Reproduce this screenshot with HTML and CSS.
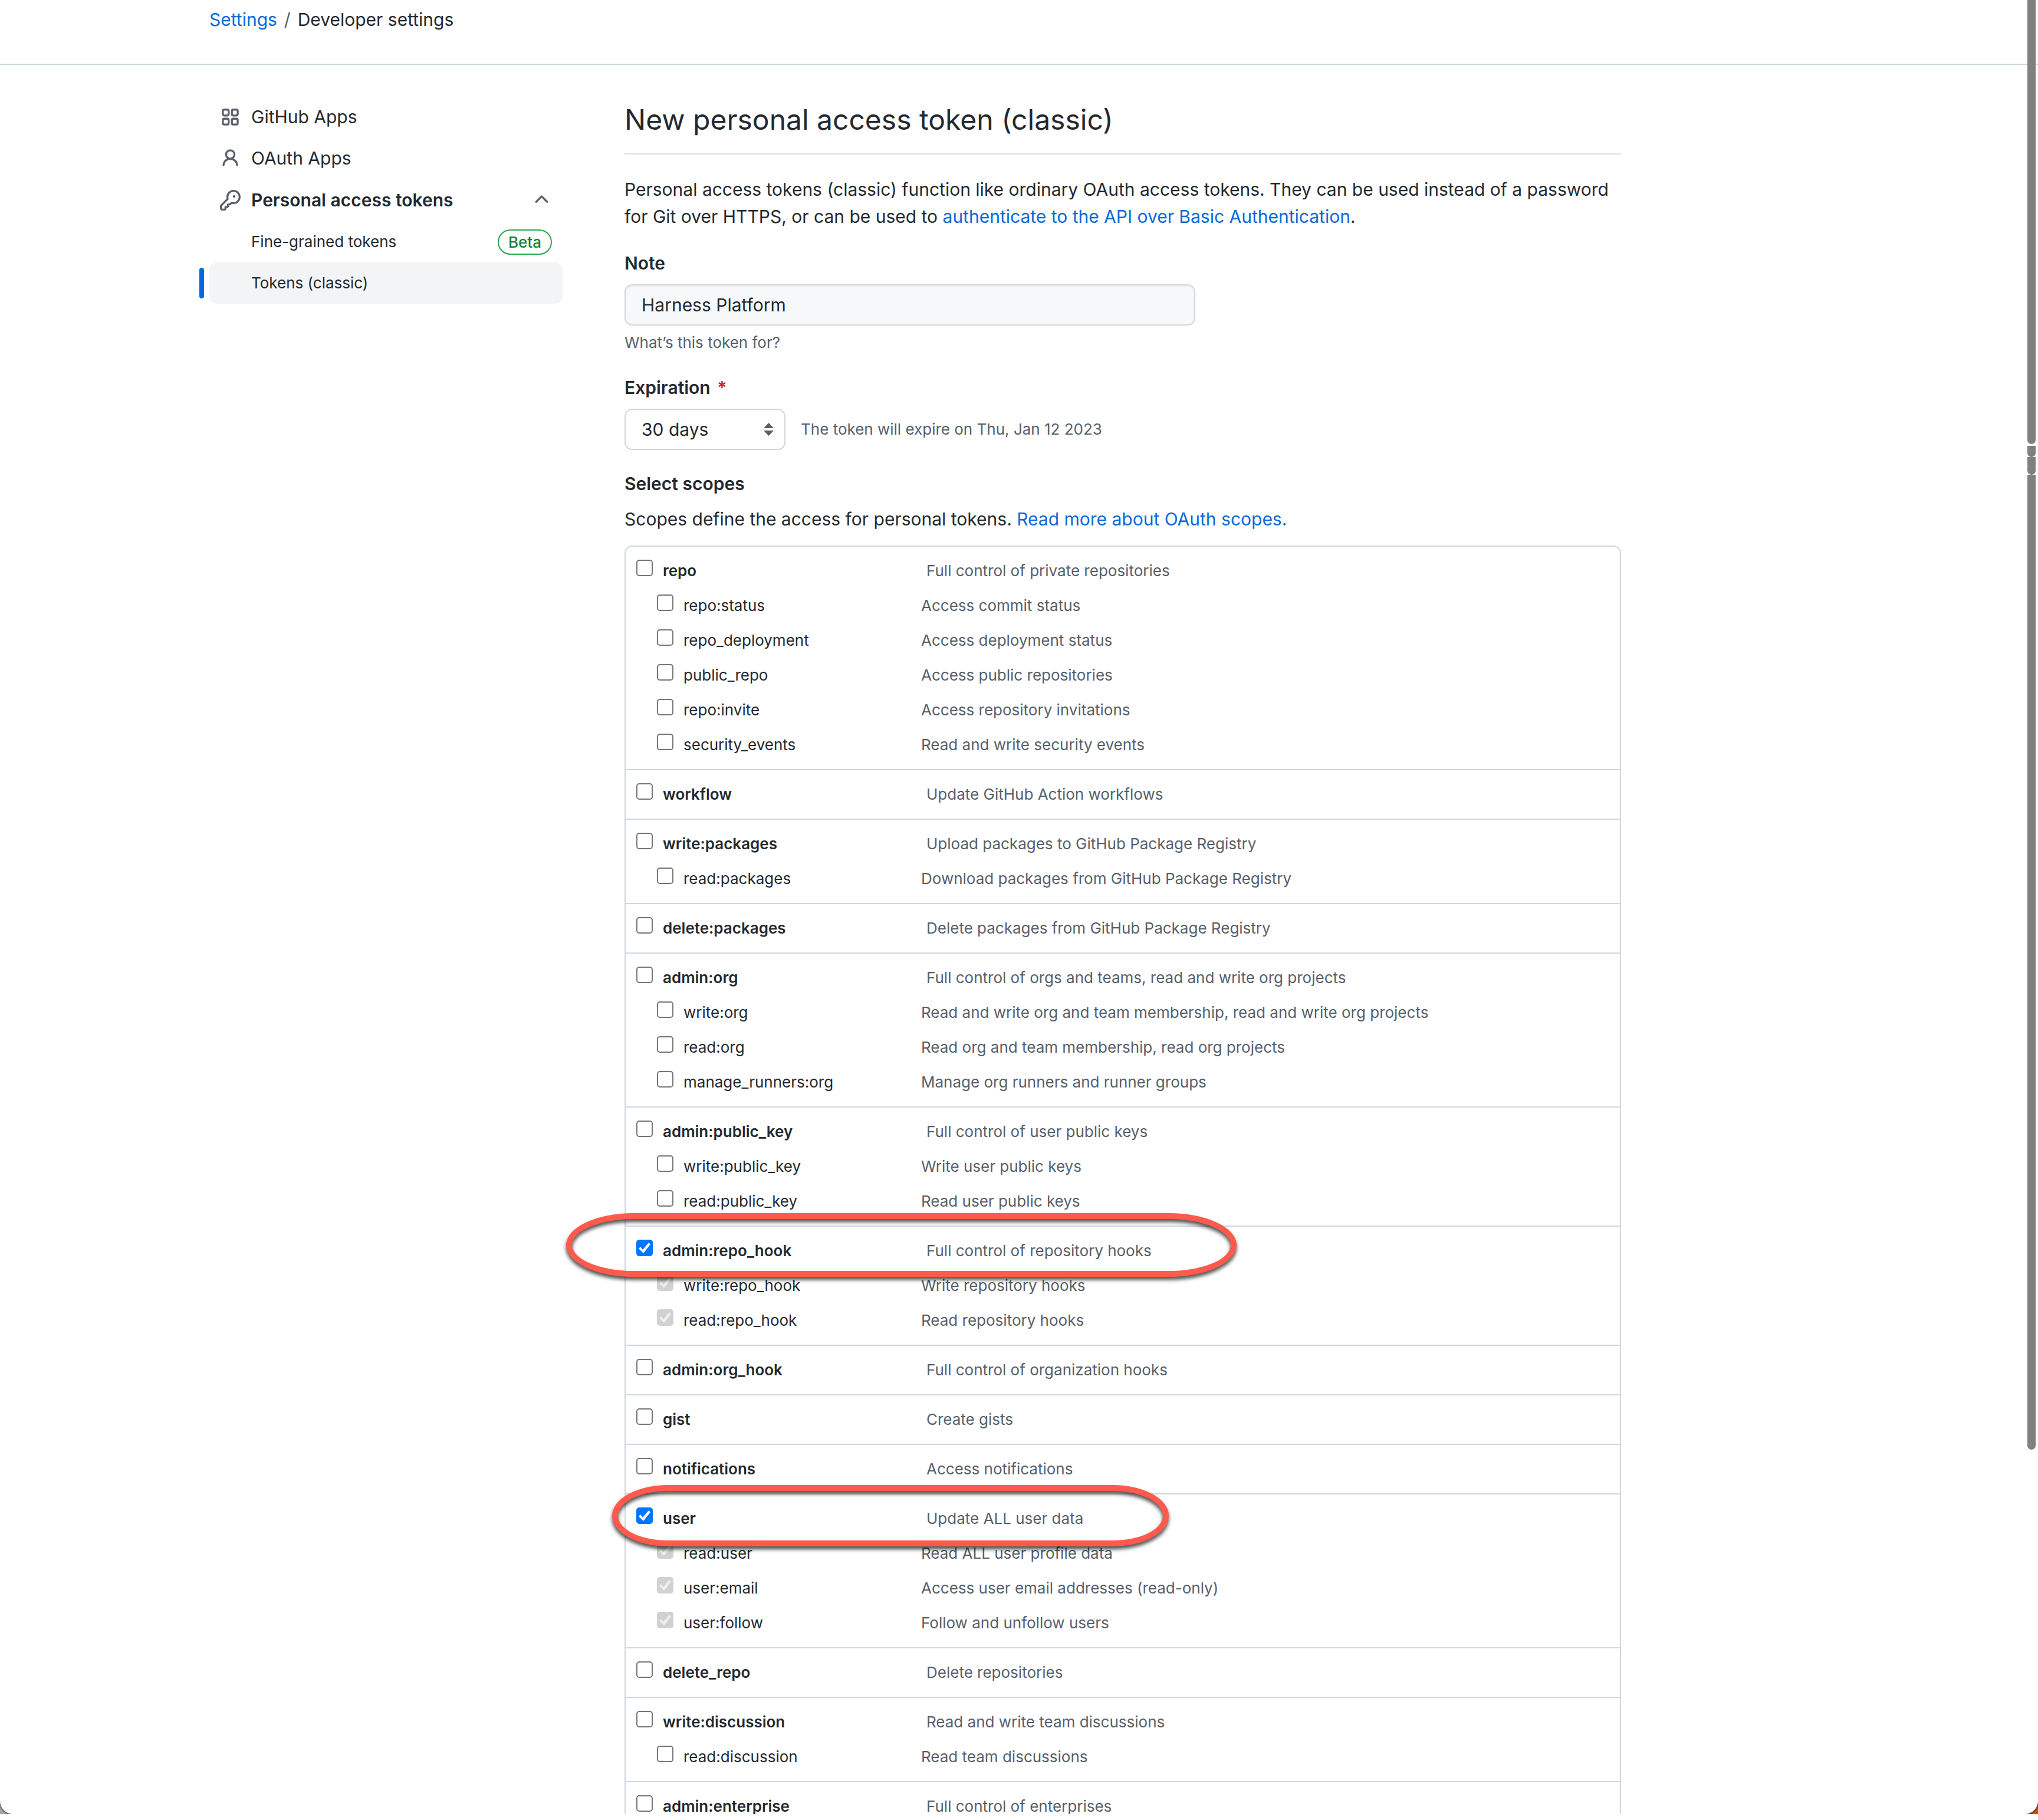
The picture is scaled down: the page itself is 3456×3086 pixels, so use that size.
FILE: index.html
```html
<!DOCTYPE html>
<html lang="en">
<head>
<meta charset="utf-8">
<title>New personal access token (classic)</title>
<link rel="stylesheet" href="styles.css">
</head>
<body>
<div class="backdrop">
<div class="window">
  <header class="topbar">
    <nav class="container breadcrumb" aria-label="Breadcrumb">
      <a href="#settings">Settings</a><span class="slash">/</span><span>Developer settings</span>
    </nav>
  </header>
  <div class="container layout">
    <nav class="sidebar" aria-label="Developer settings">
      <a class="nav-item" href="#apps"><svg class="icon" viewBox="0 0 16 16" fill="none" stroke="currentColor" stroke-width="1.5"><rect x="2.25" y="2.25" width="4.5" height="4.5" rx="1"/><rect x="9.25" y="2.25" width="4.5" height="4.5" rx="1"/><rect x="2.25" y="9.25" width="4.5" height="4.5" rx="1"/><rect x="9.25" y="9.25" width="4.5" height="4.5" rx="1"/></svg>GitHub Apps</a>
      <a class="nav-item" href="#oauth"><svg class="icon" viewBox="0 0 16 16" fill="currentColor"><path d="M10.5 5a2.5 2.5 0 11-5 0 2.5 2.5 0 015 0zm.061 3.073a4 4 0 10-5.123 0 6.004 6.004 0 00-3.431 5.142.75.75 0 001.498.07 4.5 4.5 0 018.99 0 .75.75 0 101.498-.07 6.005 6.005 0 00-3.432-5.142z"/></svg>OAuth Apps</a>
      <button class="nav-item nav-group" type="button" aria-expanded="true"><svg class="icon" viewBox="0 0 16 16" fill="currentColor"><path d="M6.5 5.5a4 4 0 112.731 3.795.75.75 0 00-.768.18L7.44 10.5H6.25a.75.75 0 00-.75.75v1.19l-.06.06H4.25a.75.75 0 00-.75.75v1.19l-.06.06H1.75a.25.25 0 01-.25-.25v-1.69l5.024-5.023a.75.75 0 00.181-.768A3.995 3.995 0 016.5 5.5zm4-5.5a5.5 5.5 0 00-5.348 6.788L.22 11.72a.75.75 0 00-.22.53v2C0 15.216.784 16 1.75 16h2a.75.75 0 00.53-.22l.5-.5a.75.75 0 00.22-.53V14h.75a.75.75 0 00.53-.22l.5-.5a.75.75 0 00.22-.53V12h.75a.75.75 0 00.53-.22l.932-.932A5.5 5.5 0 1010.5 0zm.5 6a1 1 0 100-2 1 1 0 000 2z"/></svg>Personal access tokens<svg class="icon trailing" viewBox="0 0 16 16" fill="currentColor"><path d="M3.22 9.78a.75.75 0 010-1.06l4.25-4.25a.75.75 0 011.06 0l4.25 4.25a.75.75 0 01-1.06 1.06L8 6.06 4.28 9.78a.75.75 0 01-1.06 0z"/></svg></button>
      <a class="nav-item nav-sub" href="#fine">Fine-grained tokens<span class="badge trailing">Beta</span></a>
      <a class="nav-item nav-sub current" href="#classic" aria-current="page">Tokens (classic)</a>
    </nav>

    <main class="main">
      <h1>New personal access token (classic)</h1>
      <p class="intro">Personal access tokens (classic) function like ordinary OAuth access tokens. They can be used instead of a password for Git over HTTPS, or can be used to <a href="#basic">authenticate to the API over Basic Authentication</a>.</p>

      <form>
        <div class="field">
          <label class="field-label" for="note">Note</label>
          <input class="text-input" id="note" type="text" value="Harness Platform">
          <p class="hint">What’s this token for?</p>
        </div>
        <div class="field">
          <label class="field-label" for="expiration">Expiration <span class="required">*</span></label>
          <div class="select-row">
            <span class="select-wrap">
              <select id="expiration"><option>30 days</option></select>
              <svg class="select-arrows" viewBox="0 0 17 22" fill="currentColor"><path d="M8.500 0 17 9H0zM0 13h17L8.500 22z"/></svg>
            </span>
            <span class="hint-inline">The token will expire on Thu, Jan 12 2023</span>
          </div>
        </div>
        <div class="field scopes-intro">
          <h2 class="field-label">Select scopes</h2>
          <p class="scopes-note">Scopes define the access for personal tokens. <a href="#scopes">Read more about OAuth scopes.</a></p>
        </div>

        <div class="scopes">
          <section class="scope">
            <div class="row"><label><input type="checkbox">repo</label><span>Full control of private repositories</span></div>
            <div class="row sub"><label><input type="checkbox">repo:status</label><span>Access commit status</span></div>
            <div class="row sub"><label><input type="checkbox">repo_deployment</label><span>Access deployment status</span></div>
            <div class="row sub"><label><input type="checkbox">public_repo</label><span>Access public repositories</span></div>
            <div class="row sub"><label><input type="checkbox">repo:invite</label><span>Access repository invitations</span></div>
            <div class="row sub"><label><input type="checkbox">security_events</label><span>Read and write security events</span></div>
          </section>
          <section class="scope">
            <div class="row"><label><input type="checkbox">workflow</label><span>Update GitHub Action workflows</span></div>
          </section>
          <section class="scope">
            <div class="row"><label><input type="checkbox">write:packages</label><span>Upload packages to GitHub Package Registry</span></div>
            <div class="row sub"><label><input type="checkbox">read:packages</label><span>Download packages from GitHub Package Registry</span></div>
          </section>
          <section class="scope">
            <div class="row"><label><input type="checkbox">delete:packages</label><span>Delete packages from GitHub Package Registry</span></div>
          </section>
          <section class="scope">
            <div class="row"><label><input type="checkbox">admin:org</label><span>Full control of orgs and teams, read and write org projects</span></div>
            <div class="row sub"><label><input type="checkbox">write:org</label><span>Read and write org and team membership, read and write org projects</span></div>
            <div class="row sub"><label><input type="checkbox">read:org</label><span>Read org and team membership, read org projects</span></div>
            <div class="row sub"><label><input type="checkbox">manage_runners:org</label><span>Manage org runners and runner groups</span></div>
          </section>
          <section class="scope">
            <div class="row"><label><input type="checkbox">admin:public_key</label><span>Full control of user public keys</span></div>
            <div class="row sub"><label><input type="checkbox">write:public_key</label><span>Write user public keys</span></div>
            <div class="row sub"><label><input type="checkbox">read:public_key</label><span>Read user public keys</span></div>
          </section>
          <section class="scope">
            <div class="row"><label><input type="checkbox" checked>admin:repo_hook</label><span>Full control of repository hooks</span></div>
            <div class="row sub"><label><input type="checkbox" checked disabled>write:repo_hook</label><span>Write repository hooks</span></div>
            <div class="row sub"><label><input type="checkbox" checked disabled>read:repo_hook</label><span>Read repository hooks</span></div>
            <div class="callout callout-hook"></div>
          </section>
          <section class="scope">
            <div class="row"><label><input type="checkbox">admin:org_hook</label><span>Full control of organization hooks</span></div>
          </section>
          <section class="scope">
            <div class="row"><label><input type="checkbox">gist</label><span>Create gists</span></div>
          </section>
          <section class="scope">
            <div class="row"><label><input type="checkbox">notifications</label><span>Access notifications</span></div>
          </section>
          <section class="scope">
            <div class="row"><label><input type="checkbox" checked>user</label><span>Update ALL user data</span></div>
            <div class="row sub"><label><input type="checkbox" checked disabled>read:user</label><span>Read ALL user profile data</span></div>
            <div class="row sub"><label><input type="checkbox" checked disabled>user:email</label><span>Access user email addresses (read-only)</span></div>
            <div class="row sub"><label><input type="checkbox" checked disabled>user:follow</label><span>Follow and unfollow users</span></div>
            <div class="callout callout-user"></div>
          </section>
          <section class="scope">
            <div class="row"><label><input type="checkbox">delete_repo</label><span>Delete repositories</span></div>
          </section>
          <section class="scope">
            <div class="row"><label><input type="checkbox">write:discussion</label><span>Read and write team discussions</span></div>
            <div class="row sub"><label><input type="checkbox">read:discussion</label><span>Read team discussions</span></div>
          </section>
          <section class="scope">
            <div class="row"><label><input type="checkbox">admin:enterprise</label><span>Full control of enterprises</span></div>
          </section>
        </div>
      </form>
    </main>
  </div>
  <div class="scrollbar"><i class="thumb thumb-a"></i><i class="thumb thumb-b"></i><i class="thumb thumb-c"></i><i class="thumb thumb-d"></i></div>
</div>
</div>
</body>
</html>
```
FILE: styles.css
```css
:root {
  --fg: #24292f;
  --muted: #57606a;
  --link: #0969da;
  --line: #d0d7de;
  --text: 30px;
  --small: 26px;
}

* { box-sizing: border-box; }

body {
  margin: 0;
  background: #fff;
  color: var(--fg);
  font-family: Inter, "Liberation Sans", sans-serif;
  font-size: var(--text);
  line-height: 46px;
}

h1, h2, p { margin: 0; }
a { color: var(--link); text-decoration: none; }
button, input, select { font: inherit; color: inherit; margin: 0; }

.backdrop {
  height: calc(100vh - 10px);
  overflow: hidden;
  background: linear-gradient(90deg, #a6a8aa 50%, #c9540f 50%);
}

.window {
  position: relative;
  height: 100%;
  overflow: hidden;
  background: #fff;
  border-radius: 0 0 22px 22px;
  box-shadow: 0 0 3px 1px rgba(0, 0, 0, 0.7);
}

.container {
  max-width: 2816px;
  margin: 0 auto;
  padding: 0 35px;
}

.topbar {
  padding: 10px 0 52px;
  border-bottom: 2px solid var(--line);
}

.breadcrumb { display: flex; gap: 12px; }
.slash { color: var(--muted); }

.layout {
  display: flex;
  align-items: flex-start;
  gap: 105px;
  padding-top: 53px;
}

/* Sidebar */
.sidebar {
  display: flex;
  flex-direction: column;
  flex: 0 0 599px;
}

.nav-item {
  position: relative;
  display: flex;
  align-items: center;
  gap: 18px;
  height: 70px;
  padding: 0 18px;
  border: 0;
  border-radius: 13px;
  background: none;
  color: var(--fg);
  text-align: left;
}

.nav-group { height: 72px; font-weight: 600; }
.nav-sub { padding-left: 71px; font-size: var(--small); }
.current { background: #f3f4f6; }

.current::before {
  content: "";
  position: absolute;
  left: -17px;
  top: 9px;
  bottom: 9px;
  width: 8px;
  border-radius: 8px;
  background: var(--link);
}

.icon { width: 35px; height: 35px; color: var(--muted); }
.trailing { margin-left: auto; }

.badge {
  padding: 0 16px;
  border: 2px solid #2da44e;
  border-radius: 22px;
  color: #1a7f37;
  font-weight: 500;
  line-height: 39px;
}

/* Form */
.main { flex: 0 1 1690px; min-width: 0; }

h1 {
  padding-bottom: 17px;
  border-bottom: 2px solid #d8dee4;
  font-size: 48px;
  font-weight: 400;
  line-height: 80px;
}

.intro { margin-top: 36px; }
.field { margin-top: 33px; }
.scopes-intro { margin-top: 34px; }

.field-label {
  display: block;
  font-size: var(--text);
  font-weight: 600;
}

.required { margin-left: 4px; color: #cf222e; }

.text-input,
select {
  display: block;
  height: 70px;
  padding: 0 27px;
  border: 2px solid var(--line);
  border-radius: 13px;
  background: #fff;
}

.text-input {
  width: 968px;
  max-width: 100%;
  margin-top: 13px;
  background: #f6f8fa;
  box-shadow: inset 0 2px 2px rgba(208, 215, 222, 0.3);
}

.hint,
.hint-inline {
  color: var(--muted);
  font-size: var(--small);
  line-height: 40px;
}

.hint { margin-top: 9px; }

.select-row {
  display: flex;
  align-items: center;
  gap: 26px;
  margin-top: 13px;
}

.select-wrap { position: relative; color: var(--fg); }
select { width: 273px; appearance: none; }

.select-arrows {
  position: absolute;
  right: 20px;
  top: 24px;
  width: 17px;
  height: 22px;
  color: var(--muted);
  pointer-events: none;
}

.scopes-note { margin-top: 14px; }

/* Scope list */
.scopes {
  margin-top: 22px;
  border: 2px solid var(--line);
  border-radius: 13px;
  font-size: var(--small);
  line-height: 40px;
}

.scope {
  position: relative;
  margin: 0 -2px;
  padding: 21px 20px;
  border-top: 2px solid var(--line);
}

.scope:first-child { border-top: 0; }

.row {
  display: grid;
  grid-template-columns: 492px 1fr;
  align-items: baseline;
  height: 40px;
  color: var(--muted);
}

.row label {
  display: flex;
  align-items: baseline;
  gap: 17px;
  color: var(--fg);
  font-weight: 600;
}

.sub {
  grid-template-columns: 448px 1fr;
  margin-top: 19px;
  padding-left: 35px;
}

.sub label { font-weight: 400; }

input[type="checkbox"] {
  appearance: none;
  flex: none;
  width: 28px;
  height: 28px;
  border: 2px solid #767676;
  border-radius: 5px;
  background: #fff;
}

input[type="checkbox"]:checked { border: 0; background: #0075ff; }
input[type="checkbox"]:checked:disabled { background: #d1d1d1; }

input[type="checkbox"]:checked::before {
  content: "";
  display: block;
  width: 28px;
  height: 28px;
  background: #fff;
  clip-path: polygon(4px 15px, 7px 12px, 11px 17px, 21px 5px, 24px 8px, 12px 23px);
}

input[type="checkbox"]:disabled::before { background: #f0f0f0; }

/* Highlight rings laid over the list */
.callout {
  position: absolute;
  z-index: 1;
  border: 10px solid #ff5a4b;
  filter: drop-shadow(0 5px 3px rgba(0, 0, 0, 0.7));
  pointer-events: none;
}

.callout-hook {
  left: -99px;
  top: -23px;
  width: 1137px;
  height: 108px;
  border-radius: 115px / 54px;
}

.callout-user {
  left: -21px;
  top: -16px;
  width: 944px;
  height: 104px;
  border-radius: 95px / 52px;
}

/* Scroll thumbs over the right edge */
.scrollbar {
  position: absolute;
  top: 0;
  right: 4px;
  bottom: 0;
  width: 14px;
}

.thumb {
  display: block;
  border-radius: 0 0 7px 7px;
  background: #808080;
}

.thumb-a { height: 753px; margin-bottom: 3px; }
.thumb-b { height: 19px; }
.thumb-c { height: 30px; }
.thumb-d { height: 1653px; }
```
